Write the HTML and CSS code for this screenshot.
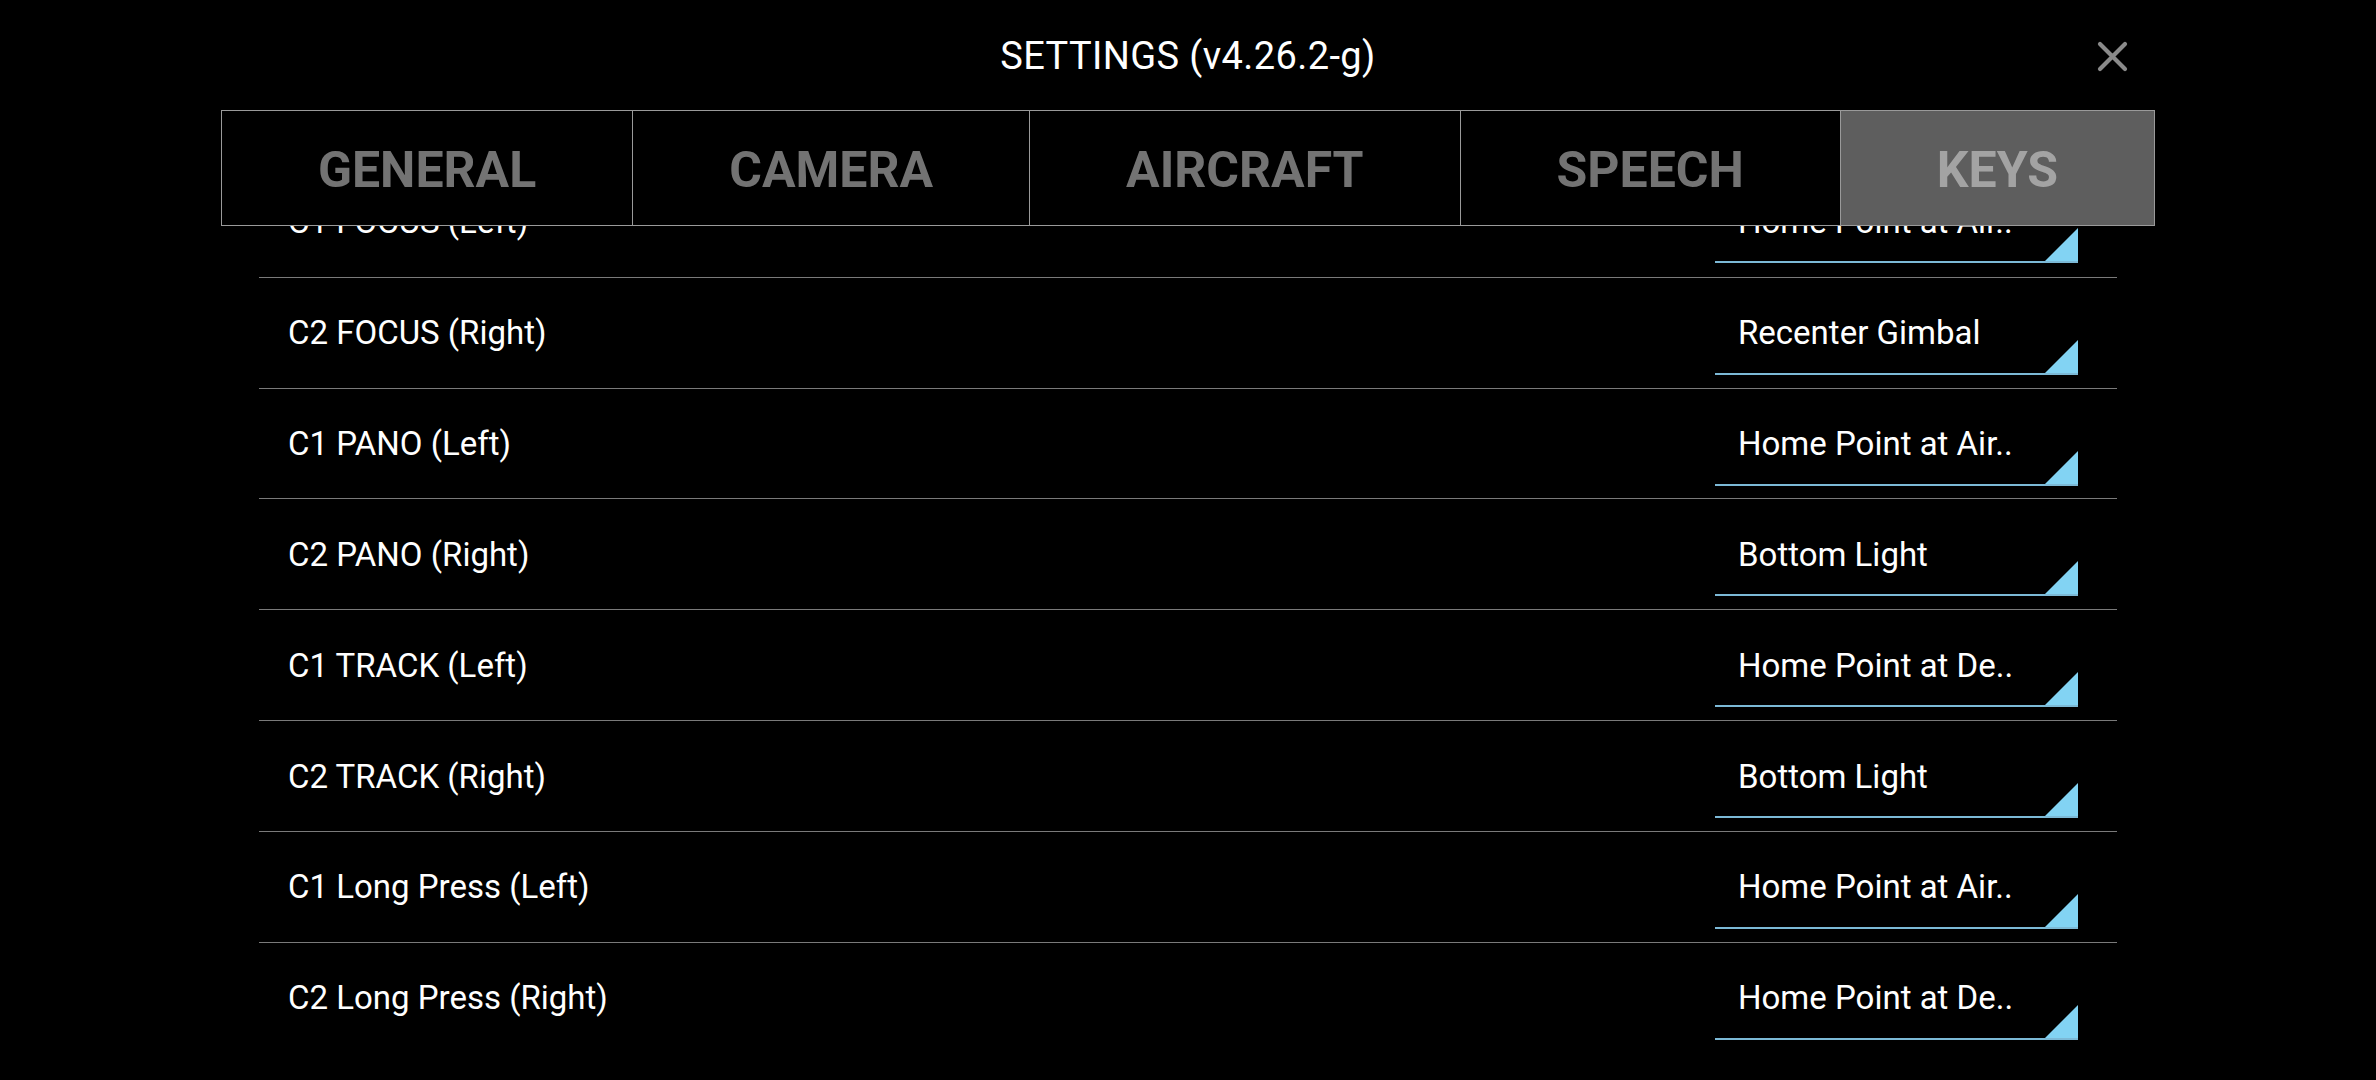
FILE: index.html
```html
<!DOCTYPE html>
<html lang="en">
<head>
<meta charset="utf-8">
<title>Settings</title>
<link rel="stylesheet" href="styles.css">
</head>
<body>
<div class="screen">
  <header class="header">
    <div class="header-side"></div>
    <h1 class="title">SETTINGS (v4.26.2-g)</h1>
    <div class="header-side header-right">
      <button class="close" aria-label="Close">
        <svg width="31" height="31" viewBox="0 0 31 31"><path d="M3 3 L28 28 M28 3 L3 28" stroke="#8a8a8a" stroke-width="4.2" stroke-linecap="round" fill="none"/></svg>
      </button>
    </div>
  </header>
  <nav class="tabs">
    <div class="tab">GENERAL</div>
    <div class="tab">CAMERA</div>
    <div class="tab">AIRCRAFT</div>
    <div class="tab">SPEECH</div>
    <div class="tab active">KEYS</div>
  </nav>
  <div class="viewport">
    <div class="list">
      <div class="row"><span class="label">C1 FOCUS (Left)</span><div class="select"><span class="value">Home Point at Air..</span><span class="tri"></span></div></div>
      <div class="row"><span class="label">C2 FOCUS (Right)</span><div class="select"><span class="value">Recenter Gimbal</span><span class="tri"></span></div></div>
      <div class="row"><span class="label">C1 PANO (Left)</span><div class="select"><span class="value">Home Point at Air..</span><span class="tri"></span></div></div>
      <div class="row"><span class="label">C2 PANO (Right)</span><div class="select"><span class="value">Bottom Light</span><span class="tri"></span></div></div>
      <div class="row"><span class="label">C1 TRACK (Left)</span><div class="select"><span class="value">Home Point at De..</span><span class="tri"></span></div></div>
      <div class="row"><span class="label">C2 TRACK (Right)</span><div class="select"><span class="value">Bottom Light</span><span class="tri"></span></div></div>
      <div class="row"><span class="label">C1 Long Press (Left)</span><div class="select"><span class="value">Home Point at Air..</span><span class="tri"></span></div></div>
      <div class="row"><span class="label">C2 Long Press (Right)</span><div class="select"><span class="value">Home Point at De..</span><span class="tri"></span></div></div>
    </div>
  </div>
</div>
</body>
</html>
```
FILE: styles.css
```css
html, body {
  margin: 0;
  padding: 0;
  background: #000;
  height: 1080px;
  overflow: hidden;
}
body {
  font-family: Roboto, "Liberation Sans", sans-serif;
  color: #fff;
}
.screen {
  height: 1080px;
  display: flex;
  flex-direction: column;
}
.header {
  width: 1935px;
  margin: 0 auto;
  height: 110px;
  box-sizing: border-box;
  padding-top: 2px;
  display: grid;
  grid-template-columns: 1fr auto 1fr;
  align-items: center;
}
.title {
  margin: 0;
  font-weight: 400;
  font-size: 38px;
  letter-spacing: 0.4px;
  color: #fff;
  white-space: nowrap;
}
.header-right {
  display: flex;
  justify-content: flex-end;
  padding-right: 28px;
}
.close {
  background: none;
  border: 0;
  padding: 0;
  margin: 0;
  width: 31px;
  height: 31px;
  display: block;
}
.close svg { display: block; }
.tabs {
  position: relative;
  z-index: 2;
  background: #000;
  align-self: center;
  display: flex;
  height: 116px;
  box-sizing: border-box;
  border-top: 1px solid #9a9a9a;
  border-bottom: 1px solid #9a9a9a;
  border-left: 1px solid #9a9a9a;
}
.tab {
  display: flex;
  align-items: center;
  justify-content: center;
  padding: 4px 96px 0;
  border-right: 1px solid #9a9a9a;
  font-weight: 700;
  font-size: 50px;
  color: #737373;
  white-space: nowrap;
}
.tab.active {
  background: #5e5e5e;
  color: #a3a3a3;
}
.viewport {
  flex: 1;
  overflow: hidden;
}
.list {
  width: 1858px;
  margin: -60px auto 0;
}
.row {
  height: 110.83px;
  box-sizing: border-box;
  display: flex;
  align-items: center;
  justify-content: space-between;
  padding-left: 29px;
  padding-right: 39px;
}
.row + .row {
  border-top: 1px solid #7a7a7a;
}
.label, .value {
  font-size: 33px;
  color: #fff;
  white-space: nowrap;
}
.select {
  width: 363px;
  height: 84px;
  box-sizing: border-box;
  padding: 2px 0 0 23px;
  border-bottom: 2px solid #7cb9d6;
  display: flex;
  align-items: center;
  justify-content: space-between;
}
.tri {
  align-self: flex-end;
  width: 0;
  height: 0;
  border-style: solid;
  border-width: 0 0 33px 33px;
  border-color: transparent transparent #82d3f3 transparent;
}
```
